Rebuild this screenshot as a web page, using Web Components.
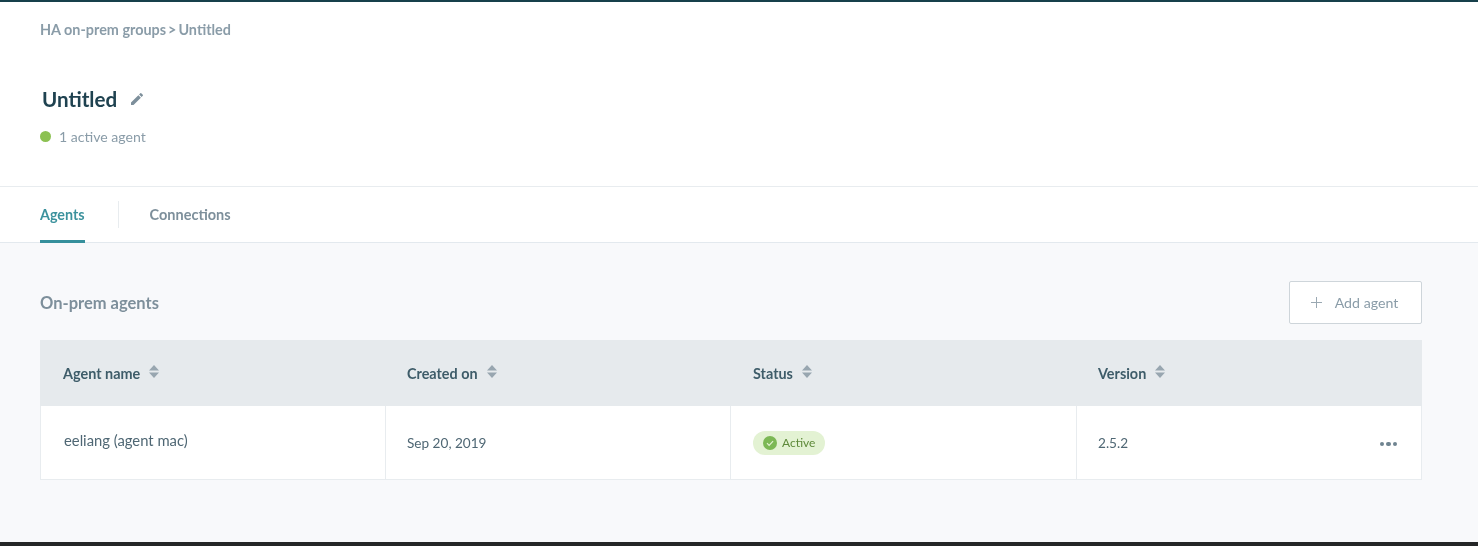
<!DOCTYPE html>
<html>
<head>
<meta charset="utf-8">
<title>Untitled</title>
<style>
  html, body { margin: 0; height: 100%; }
  body { font-family: "Lato", "Liberation Sans", sans-serif; overflow: hidden; }
</style>
</head>
<body>
<ha-page>
  <group-header title-text="Untitled" agents="1 active agent"></group-header>
  <tab-bar></tab-bar>
  <agents-panel></agents-panel>
</ha-page>
<script>
class HaPage extends HTMLElement {
  constructor() {
    super();
    this.attachShadow({ mode: 'open' }).innerHTML = `
    <style>
      :host {
        display: flex;
        flex-direction: column;
        height: 546px;
        box-sizing: border-box;
        border-top: 2px solid #17404b;
        border-bottom: 4px solid #242627;
        background: #f8f9fb;
        filter: blur(0.3px);
      }
    </style>
    <slot></slot>`;
  }
}

class GroupHeader extends HTMLElement {
  constructor() {
    super();
    this.attachShadow({ mode: 'open' });
  }

  connectedCallback() {
    this.shadowRoot.innerHTML = `
    <style>
      :host {
        display: block;
        height: 185px;
        box-sizing: border-box;
        padding: 19px 40px 0;
        background: #fff;
        border-bottom: 1px solid #e8ecef;
      }
      .crumbs { font-size: 14.4px; line-height: 17px; font-weight: 700; color: #8a9ca8; display: flex; gap: 2px; }
      h1 { margin: 48px 0 0 2px; font-size: 20.6px; line-height: 26px; font-weight: 700; color: #1f4250; display: flex; align-items: center; gap: 12px; }
      .status { margin-top: 16px; display: flex; align-items: center; gap: 8px; font-size: 14.1px; line-height: 17px; color: #8a9ca8; }
      .dot { width: 11px; height: 11px; border-radius: 50%; background: #8cc152; }
    </style>
    <div class="crumbs"><span>HA on-prem groups</span><span>&gt;</span><span>Untitled</span></div>
    <h1>${this.getAttribute('title-text')}
      <svg width="16" height="16" viewBox="0 0 24 24" fill="#7d8f9b"><path d="M3 17.25V21h3.75L17.81 9.94l-3.75-3.75L3 17.25zM20.71 7.04a1 1 0 0 0 0-1.41l-2.34-2.34a1 1 0 0 0-1.41 0l-1.83 1.83 3.75 3.75 1.83-1.83z"/></svg>
    </h1>
    <div class="status"><span class="dot"></span><span>${this.getAttribute('agents')}</span></div>`;
  }
}

class TabBar extends HTMLElement {
  constructor() {
    super();
    this.attachShadow({ mode: 'open' }).innerHTML = `
    <style>
      :host {
        display: flex;
        align-items: stretch;
        height: 56px;
        box-sizing: border-box;
        padding: 0 40px;
        background: #fff;
        border-bottom: 1px solid #e3e9ee;
        font-size: 14.5px;
        font-weight: 700;
      }
      .tab { display: flex; align-items: center; color: #7d8f9b; box-sizing: border-box; }
      .active { color: #3c929d; border-bottom: 3px solid #36909c; margin-bottom: -1px; padding-top: 2px; font-size: 14.3px; }
      .sep { width: 1px; height: 27px; margin: 14px 31px 0 33px; background: #e8ecef; }
    </style>
    <div class="tab active">Agents</div>
    <div class="sep"></div>
    <div class="tab">Connections</div>`;
  }
}

class SortIcon extends HTMLElement {
  constructor() {
    super();
    this.attachShadow({ mode: 'open' }).innerHTML = `
    <style>:host { display: inline-flex; margin-bottom: 3px; }</style>
    <svg width="10" height="13" viewBox="0 0 10 13" fill="#98a6b0"><path d="M5 0l5 5.6H0zM0 7.4h10L5 13z"/></svg>`;
  }
}

class StatusPill extends HTMLElement {
  constructor() {
    super();
    this.attachShadow({ mode: 'open' }).innerHTML = `
    <style>
      :host {
        display: inline-flex;
        align-items: center;
        gap: 5px;
        height: 24px;
        padding: 0 10px;
        border-radius: 12px;
        background: #e3f2d3;
        color: #5e8a3a;
        font-size: 12px;
      }
    </style>
    <svg width="14" height="14" viewBox="0 0 14 14"><circle cx="7" cy="7" r="7" fill="#7cb855"/><path d="M4 7.2l2.1 2.1 4-4.1" fill="none" stroke="#e3f2d3" stroke-width="1.2"/></svg>
    <slot></slot>`;
  }
}

class AgentsPanel extends HTMLElement {
  constructor() {
    super();
    this.attachShadow({ mode: 'open' }).innerHTML = `
    <style>
      :host { display: block; padding: 37px 56px 0 40px; }
      .top { display: flex; justify-content: space-between; align-items: center; height: 44px; }
      h2 { margin: 2px 0 0; font-size: 16.5px; font-weight: 700; color: #7d8f9b; }
      button {
        width: 133px; height: 43px; box-sizing: border-box;
        display: flex; align-items: center; justify-content: center; gap: 13px; padding: 0 2px 0 0;
        background: #fff; border: 1px solid #ced5da; border-radius: 2px;
        font: 400 14.2px "Lato", sans-serif; color: #8a9ca8;
      }
      .grid { margin-top: 16px; display: grid; grid-template-columns: 346px 345px 346px 1fr; }
      .th {
        height: 66px; background: #e6eaed; box-sizing: border-box; padding: 0 21px;
        display: flex; align-items: center; gap: 9px;
        font-size: 14.4px; font-weight: 700; color: #3e5c69;
      }
      .td {
        height: 74px; background: #fff; box-sizing: border-box; padding: 0 21px;
        display: flex; align-items: center; justify-content: space-between;
        border-bottom: 1px solid #e8ecef; border-right: 1px solid #e8ecef;
        font-size: 13.6px; color: #4f6774;
      }
      .first { border-left: 1px solid #e8ecef; padding-left: 23px; padding-bottom: 6px; font-size: 14.8px; }
      .th.first { border: 0; padding-left: 23px; padding-bottom: 0; font-size: 14.4px; }
      .odd { padding-left: 22px; }
      .dots { display: flex; gap: 2px; margin: 3px 3px 0 0; }
      .dots i { width: 4.5px; height: 4.5px; border-radius: 50%; background: #6f8490; }
    </style>
    <div class="top">
      <h2>On-prem agents</h2>
      <button><svg width="11" height="11" viewBox="0 0 11 11" stroke="#9aa8b2" fill="none"><path d="M5.5 0v11M0 5.5h11"/></svg>Add agent</button>
    </div>
    <div class="grid">
      <div class="th first">Agent name <sort-icon></sort-icon></div>
      <div class="th">Created on <sort-icon></sort-icon></div>
      <div class="th odd">Status <sort-icon></sort-icon></div>
      <div class="th">Version <sort-icon></sort-icon></div>
      <div class="td first">eeliang (agent mac)</div>
      <div class="td">Sep 20, 2019</div>
      <div class="td odd"><status-pill>Active</status-pill></div>
      <div class="td">2.5.2 <span class="dots"><i></i><i></i><i></i></span></div>
    </div>`;
  }
}

customElements.define('ha-page', HaPage);
customElements.define('group-header', GroupHeader);
customElements.define('tab-bar', TabBar);
customElements.define('sort-icon', SortIcon);
customElements.define('status-pill', StatusPill);
customElements.define('agents-panel', AgentsPanel);
</script>
</body>
</html>
